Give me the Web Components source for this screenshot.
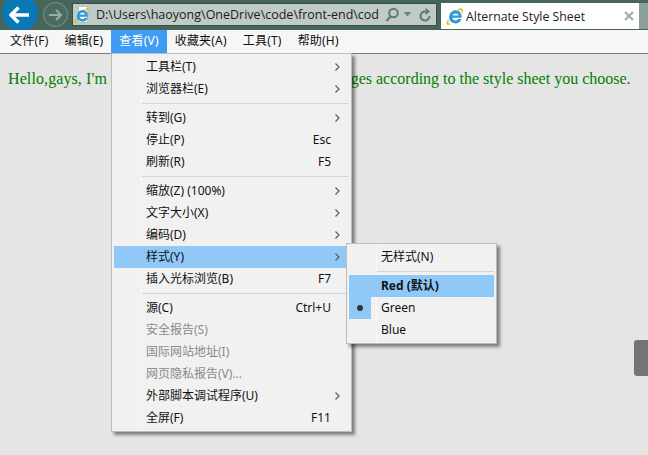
<!DOCTYPE html>
<html>
<head>
<meta charset="utf-8">
<style>
  html, body { margin: 0; height: 100%; }
  body { width: 648px; height: 455px; overflow: hidden; background: #e5e5e5; font-family: "Noto Sans", "Noto Sans CJK SC", sans-serif; }
</style>
</head>
<body>
<ie-window>
  <ie-toolbar slot="toolbar" address="D:\Users\haoyong\OneDrive\code\front-end\cod" tab="Alternate Style Sheet"></ie-toolbar>
  <ie-menubar slot="menubar"></ie-menubar>
  <p style="margin:0;font:16px 'Liberation Serif',serif;color:#008000;white-space:nowrap"><span style="letter-spacing:.1px">Hello,gays, I'm</span> <span style="word-spacing:-.8px">a page that can change styles of the</span> pages according to the style sheet you choose.</p>

  <ie-menu slot="overlay" style="left:111px;top:53px;width:241px">
    <ie-item arrow>工具栏(T)</ie-item>
    <ie-item arrow>浏览器栏(E)</ie-item>
    <ie-sep></ie-sep>
    <ie-item arrow>转到(G)</ie-item>
    <ie-item key="Esc">停止(P)</ie-item>
    <ie-item key="F5">刷新(R)</ie-item>
    <ie-sep></ie-sep>
    <ie-item arrow>缩放(Z) (100%)</ie-item>
    <ie-item arrow>文字大小(X)</ie-item>
    <ie-item arrow>编码(D)</ie-item>
    <ie-item arrow active>样式(Y)</ie-item>
    <ie-item key="F7">插入光标浏览(B)</ie-item>
    <ie-sep></ie-sep>
    <ie-item key="Ctrl+U">源(C)</ie-item>
    <ie-item disabled>安全报告(S)</ie-item>
    <ie-item disabled>国际网站地址(I)</ie-item>
    <ie-item disabled>网页隐私报告(V)...</ie-item>
    <ie-item arrow>外部脚本调试程序(U)</ie-item>
    <ie-item key="F11">全屏(F)</ie-item>
  </ie-menu>

  <ie-menu slot="overlay" style="left:346px;top:243px;width:151px">
    <ie-item>无样式(N)</ie-item>
    <ie-sep></ie-sep>
    <ie-item active bold>Red (默认)</ie-item>
    <ie-item checked>Green</ie-item>
    <ie-item>Blue</ie-item>
  </ie-menu>

  <ie-scrollgrip slot="overlay"></ie-scrollgrip>
</ie-window>

<script>
const ieLogo = `
  <svg width="17" height="17" viewBox="0 0 17 17">
    <path d="M2.500 12C.5 15.500 1 17 4 15.800M12 2C15 .3 17 1 16 4.500" fill="none" stroke="#f0bd20" stroke-width="1.600"/>
    <path d="M3.200 8.200C3.800 4.800 6.500 2.300 9.800 2.300C13.500 2.300 15.800 5.300 15.800 9.800H6.500C6.800 12.800 11 13.200 12.300 11H15.500C14.500 14 12.300 15.400 9.800 15.400C5.500 15.400 2.600 12 3.200 8.200ZM6.600 7.500H12.500C12.200 4.800 7.200 4.800 6.600 7.500Z" fill="#2f9bdc" fill-rule="evenodd"/>
  </svg>`;

const windowTemplate = document.createElement('template');
windowTemplate.innerHTML = `
  <style>
    :host { display: flex; flex-direction: column; position: relative; width: 648px; height: 455px; overflow: hidden; }
    .page { flex: 1; padding: 16px 8px 0; background: #e5e5e5; }
  </style>
  <slot name="toolbar"></slot>
  <slot name="menubar"></slot>
  <div class="page"><slot></slot></div>
  <slot name="overlay"></slot>
`;
class IeWindow extends HTMLElement {
  constructor() {
    super();
    this.attachShadow({ mode: 'open' }).append(windowTemplate.content.cloneNode(true));
  }
}
customElements.define('ie-window', IeWindow);

const toolbarTemplate = document.createElement('template');
toolbarTemplate.innerHTML = `
  <style>
    :host { display: flex; align-items: flex-start; height: 30px; overflow: hidden; background: #46655b; font: 12.500px "Open Sans", "Liberation Sans", sans-serif; color: #1c1c1c; }
    .back { width: 36px; height: 36px; margin: -5px 0 0 2px; border-radius: 50%; background: #0a78b4; display: flex; align-items: center; justify-content: center; flex: none; padding-top: 3px; box-sizing: border-box; }
    .forward { width: 25px; height: 25px; box-sizing: border-box; margin: 2px 0 0 5px; border-radius: 50%; background: #4b6b60; border: 1px solid #7d968d; display: flex; align-items: center; justify-content: center; flex: none; }
    .address { width: 365px; height: 23px; box-sizing: border-box; margin: 3px 0 0 4px; background: #bfcbc7; border: 1px solid #33504a; display: flex; align-items: center; flex: none; }
    .page-icon { position: relative; flex: none; width: 16px; height: 18px; margin: 0 6px 0 1px; }
    .page-icon i { position: absolute; left: 4px; top: 0; width: 10px; height: 17px; background: #fff; border: 1px solid #b8c0bd; box-sizing: border-box; }
    .page-icon svg { position: absolute; left: 0; top: 2px; width: 15px; height: 15px; }
    .url { flex: 1; white-space: nowrap; overflow: visible; }
    svg.tool { flex: none; }
    .tab { width: 198px; height: 26px; margin: 3px 0 0 4px; background: #fff; display: flex; align-items: center; padding-left: 5px; box-sizing: border-box; flex: none; font-size: 12.300px; }
    .tab .logo { display: flex; flex: none; }
    .tab .title { flex: 1; margin-left: 3px; white-space: nowrap; }
    .tab .close { margin-right: 5px; display: flex; }
    .rest { flex: 1; height: 26px; margin-top: 3px; background: #8aa096; }
  </style>
  <div class="back">
    <svg width="22" height="20" viewBox="0 0 22 20"><path d="M20 10H2.500M9.500 2.500L2 10L9.500 17.500" fill="none" stroke="#fff" stroke-width="3.600"/></svg>
  </div>
  <div class="forward">
    <svg width="15" height="14" viewBox="0 0 15 14"><path d="M1 7H13M8 2L13 7L8 12" fill="none" stroke="#9aaca5" stroke-width="2"/></svg>
  </div>
  <div class="address">
    <span class="page-icon"><i></i>${ieLogo}</span>
    <span class="url"></span>
    <svg class="tool" width="14" height="15" viewBox="0 0 14 15"><circle cx="8.500" cy="6" r="4.300" fill="none" stroke="#66756f" stroke-width="2"/><path d="M5.500 9.500L1.500 14" stroke="#66756f" stroke-width="2.200"/></svg>
    <svg class="tool" style="margin:0 8px 0 5px" width="7" height="5" viewBox="0 0 7 5"><path d="M0 0H7L3.500 4.500Z" fill="#6f7f79"/></svg>
    <svg class="tool" style="margin-right:5px" width="12" height="14" viewBox="0 0 12 14"><path d="M10.500 8A4.500 4.500 0 1 1 6.500 3.500" fill="none" stroke="#66756f" stroke-width="2"/><path d="M6.500 0L11 3.500L6.500 7Z" fill="#66756f"/></svg>
  </div>
  <div class="tab">
    <span class="logo">${ieLogo}</span>
    <span class="title"></span>
    <span class="close"><svg width="10" height="10" viewBox="0 0 10 10"><path d="M1 1L9 9M9 1L1 9" stroke="#a8a8a8" stroke-width="2.200"/></svg></span>
  </div>
  <div class="rest"></div>
`;
class IeToolbar extends HTMLElement {
  constructor() {
    super();
    const shadow = this.attachShadow({ mode: 'open' });
    shadow.append(toolbarTemplate.content.cloneNode(true));
    shadow.querySelector('.url').textContent = this.getAttribute('address');
    shadow.querySelector('.title').textContent = this.getAttribute('tab');
  }
}
customElements.define('ie-toolbar', IeToolbar);

const menubarTemplate = document.createElement('template');
menubarTemplate.innerHTML = `
  <style>
    :host { display: flex; height: 24px; box-sizing: border-box; background: #f6f6f6; border-bottom: 1px solid #7b7b7b; font: 12px/16px "Noto Sans", "Noto Sans CJK SC", sans-serif; letter-spacing: .2px; color: #111; padding-left: 2px; }
    span { display: flex; align-items: center; padding: 0 8px 1px; height: 23px; box-sizing: border-box; white-space: nowrap; }
    .on { background: #3f9cf5; color: #fff; }
  </style>
  <span>文件(F)</span><span>编辑(E)</span><span class="on">查看(V)</span><span>收藏夹(A)</span><span>工具(T)</span><span>帮助(H)</span>
`;
class IeMenubar extends HTMLElement {
  constructor() {
    super();
    this.attachShadow({ mode: 'open' }).append(menubarTemplate.content.cloneNode(true));
  }
}
customElements.define('ie-menubar', IeMenubar);

const menuTemplate = document.createElement('template');
menuTemplate.innerHTML = `
  <style>
    :host { display: block; position: absolute; box-sizing: border-box; background: linear-gradient(90deg, transparent 29px, #f7f7f7 29px, #f7f7f7 30px, transparent 30px) #f1f1f1; border: 1px solid #bdbdbd; box-shadow: 3px 3px 3px rgba(0,0,0,.45); padding: 2px; font: 12px/16px "Noto Sans", "Noto Sans CJK SC", sans-serif; color: #111; }
  </style>
  <slot></slot>
`;
class IeMenu extends HTMLElement {
  constructor() {
    super();
    this.attachShadow({ mode: 'open' }).append(menuTemplate.content.cloneNode(true));
  }
}
customElements.define('ie-menu', IeMenu);

const itemTemplate = document.createElement('template');
itemTemplate.innerHTML = `
  <style>
    :host { display: flex; align-items: center; height: 22px; position: relative; }
    .check { flex: none; width: 22px; height: 22px; margin-right: 10px; display: flex; align-items: center; justify-content: center; }
    .text { flex: 1; white-space: nowrap; }
    .key { margin-right: 18px; }
    .arrow { flex: none; width: 5px; height: 8px; margin-right: 9px; display: flex; }
    :host([active]) { background: #90c8f8; }
    :host([checked]) .check { background: #90c8f8; }
    :host([checked]) .check::before { content: ""; width: 6px; height: 6px; border-radius: 50%; background: #333; }
    :host([disabled]) { color: #8a8a8a; }
    :host([bold]) .text { font-weight: bold; }
  </style>
  <span class="check"></span>
  <span class="text"><slot></slot></span>
`;
class IeItem extends HTMLElement {
  constructor() {
    super();
    const shadow = this.attachShadow({ mode: 'open' });
    shadow.append(itemTemplate.content.cloneNode(true));
    if (this.hasAttribute('key')) {
      const key = document.createElement('span');
      key.className = 'key';
      key.textContent = this.getAttribute('key');
      shadow.append(key);
    }
    if (this.hasAttribute('arrow')) {
      const arrow = document.createElement('span');
      arrow.className = 'arrow';
      arrow.innerHTML = '<svg width="5" height="8" viewBox="0 0 5 8"><path d="M.5 .5L4 4L.5 7.500" fill="none" stroke="#555" stroke-width="1.100"/></svg>';
      shadow.append(arrow);
    }
  }
}
customElements.define('ie-item', IeItem);

const sepTemplate = document.createElement('template');
sepTemplate.innerHTML = `
  <style>
    :host { display: block; height: 1px; margin: 3px 0 3px 28px; background: #d4d4d4; }
  </style>
`;
class IeSep extends HTMLElement {
  constructor() {
    super();
    this.attachShadow({ mode: 'open' }).append(sepTemplate.content.cloneNode(true));
  }
}
customElements.define('ie-sep', IeSep);

const gripTemplate = document.createElement('template');
gripTemplate.innerHTML = `
  <style>
    :host { display: block; position: absolute; left: 634px; top: 340px; width: 14px; height: 36px; background: #747474; border-radius: 3px 0 0 3px; }
  </style>
`;
class IeScrollgrip extends HTMLElement {
  constructor() {
    super();
    this.attachShadow({ mode: 'open' }).append(gripTemplate.content.cloneNode(true));
  }
}
customElements.define('ie-scrollgrip', IeScrollgrip);
</script>
</body>
</html>
